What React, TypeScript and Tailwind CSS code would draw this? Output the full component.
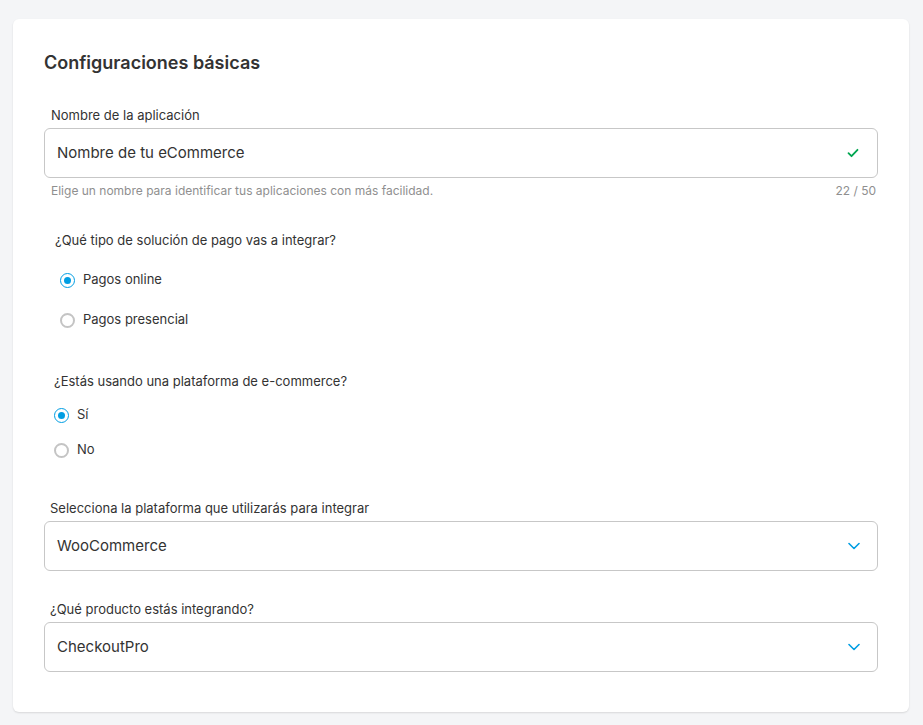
const font = { fontFamily: "Inter, Lato, sans-serif" };

const Radio = ({ checked, label }: { checked?: boolean; label: string }) => (
  <div className="flex items-center h-5 gap-2">
    <span
      className={
        "w-[15px] h-[15px] rounded-full flex items-center justify-center bg-white " +
        (checked ? "border-[1.5px] border-[#009ee3]" : "border-2 border-[#c4c4c4]")
      }
    >
      {checked && <span className="w-[7px] h-[7px] rounded-full bg-[#009ee3]" />}
    </span>
    <span className="text-[13px] text-[#333]">{label}</span>
  </div>
);

const Chevron = () => (
  <svg width="12" height="8" viewBox="0 0 12 8" fill="none">
    <path d="M1 1.5l5 5 5-5" stroke="#009ee3" strokeWidth="1.6" strokeLinecap="round" strokeLinejoin="round" />
  </svg>
);

const Select = ({ value }: { value: string }) => (
  <div className="h-[50px] rounded-md border border-[#c7c7c7] bg-white flex items-center justify-between pl-3 pr-[17px]">
    <span className="text-[15px] text-[#333]">{value}</span>
    <Chevron />
  </div>
);

export default function App() {
  return (
    <div className="min-h-[725px] bg-[#f4f5f7] pt-[19px] pl-[13px] pb-[14px]" style={font}>
      <div className="w-[896px] bg-white rounded-md shadow-[0_1px_2px_rgba(0,0,0,0.12)] px-[31px] pt-8 pb-10">
        <h1 className="text-[18px] leading-6 font-semibold text-[#333]">Configuraciones básicas</h1>

        <div className="mt-8 pl-[7px] text-[13px] leading-4 text-[#333]">Nombre de la aplicación</div>
        <div className="mt-[5px] h-[50px] rounded-md border border-[#c7c7c7] flex items-center justify-between pl-3 pr-[18px]">
          <span className="text-[15px] text-[#333]">Nombre de tu eCommerce</span>
          <svg width="12" height="10" viewBox="0 0 12 10" fill="none">
            <path d="M1.5 5.2l3 3 6-6.4" stroke="#00a650" strokeWidth="1.8" strokeLinecap="round" strokeLinejoin="round" />
          </svg>
        </div>
        <div className="mt-[5px] flex justify-between pl-[7px] text-[12px] leading-4 text-[#8f8f8f]">
          <span>Elige un nombre para identificar tus aplicaciones con más facilidad.</span>
          <span className="text-[12px] pr-[2px]">22 / 50</span>
        </div>

        <div className="mt-[33px] pl-[11px] text-[13px] leading-4 text-[#333]">
          ¿Qué tipo de solución de pago vas a integrar?
        </div>
        <div className="mt-[22px] pl-4 flex flex-col gap-5">
          <Radio checked label="Pagos online" />
          <Radio label="Pagos presencial" />
        </div>

        <div className="mt-[43px] pl-[10px] text-[13px] leading-4 text-[#333]">
          ¿Estás usando una plataforma de e-commerce?
        </div>
        <div className="mt-4 pl-[10px] flex flex-col gap-[15px]">
          <Radio checked label="Sí" />
          <Radio label="No" />
        </div>

        <div className="mt-[40px] pl-[6px] text-[13px] leading-4 text-[#333]">
          Selecciona la plataforma que utilizarás para integrar
        </div>
        <div className="mt-[5px]">
          <Select value="WooCommerce" />
        </div>

        <div className="mt-[30px] pl-[6px] text-[13px] leading-4 text-[#333]">¿Qué producto estás integrando?</div>
        <div className="mt-[5px]">
          <Select value="CheckoutPro" />
        </div>
      </div>
    </div>
  );
}
